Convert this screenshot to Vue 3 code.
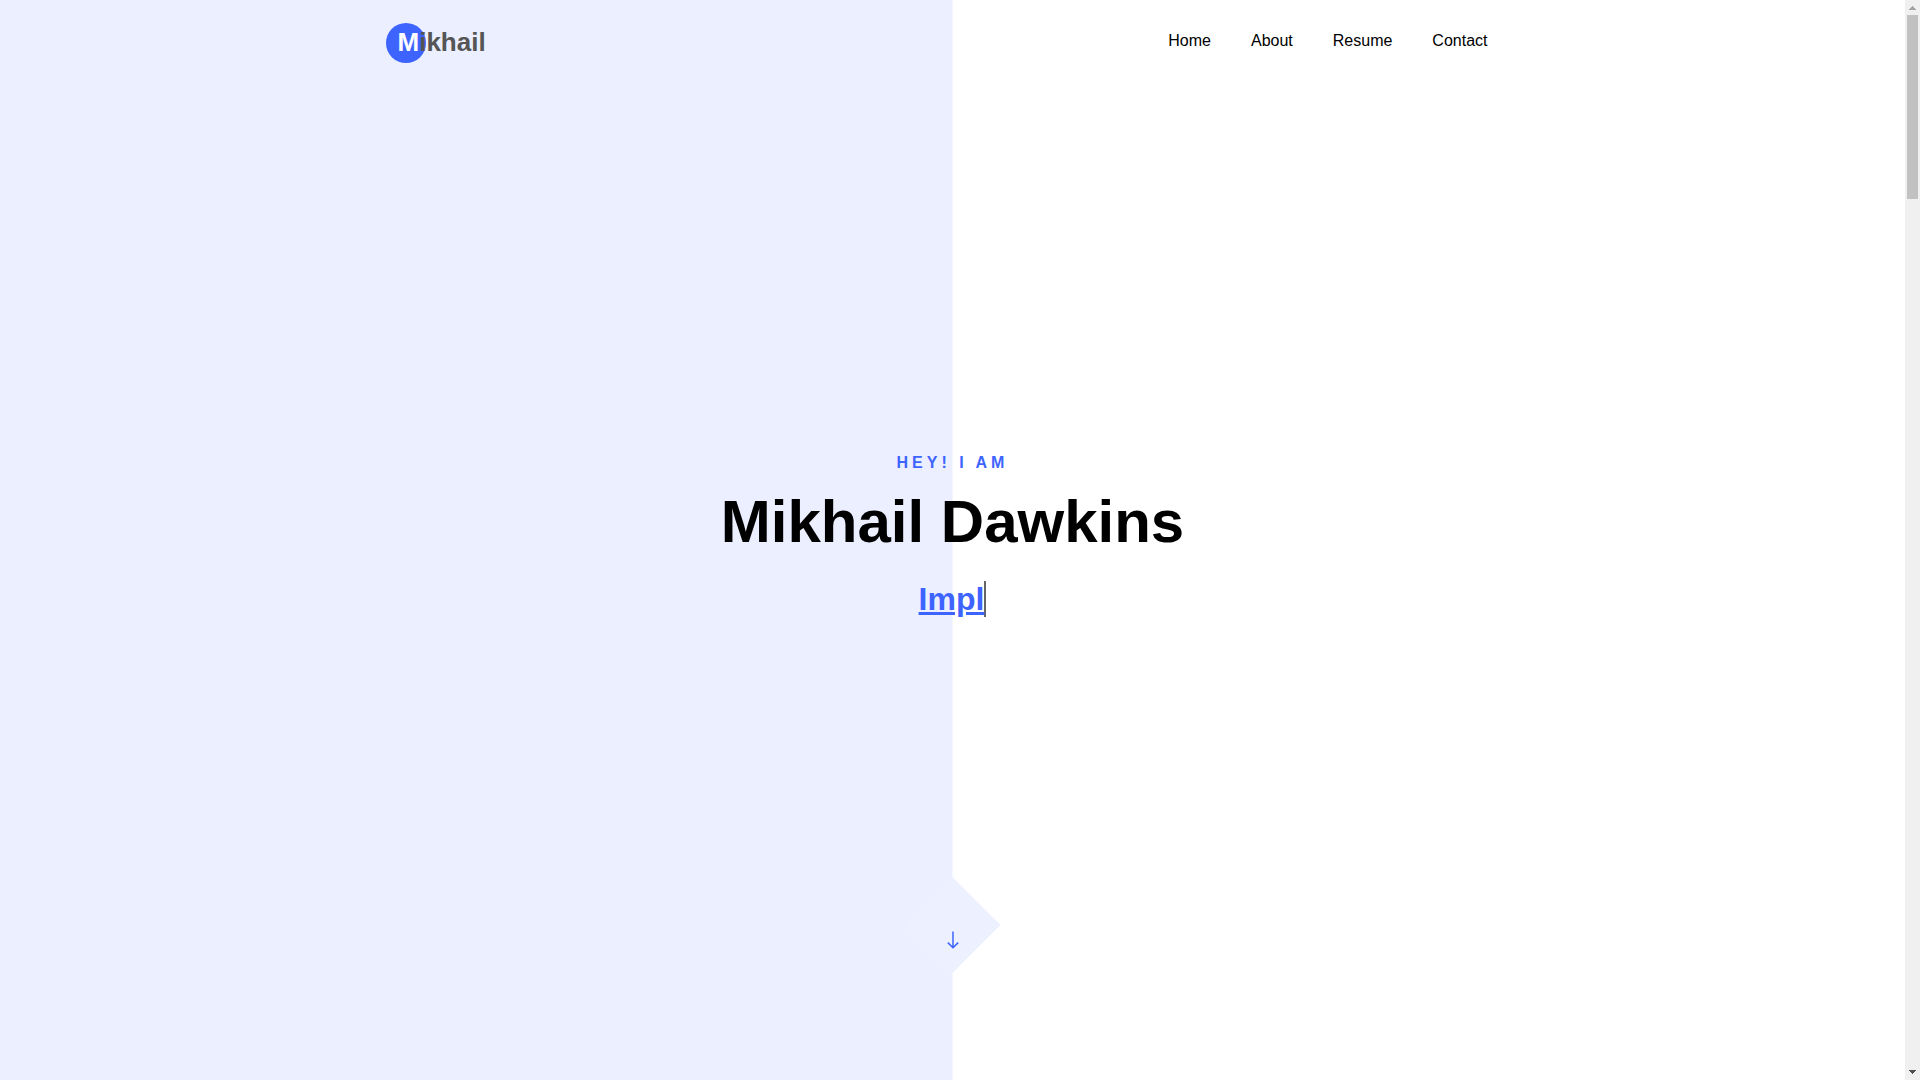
<script setup>
import { ref } from 'vue'

const links = ref([
  { label: 'Home', href: '#home' },
  { label: 'About', href: '#about' },
  { label: 'Resume', href: '#resume' },
  { label: 'Contact', href: '#contact' },
])
const typed = ref('Impl')
</script>

<template>
  <div class="window">
    <div class="page" id="home">
      <header class="navbar">
        <a class="brand" href="#home"><span class="initial">M</span>ikhail</a>
        <nav class="links" aria-label="Main">
          <a v-for="link in links" :key="link.label" :href="link.href">{{ link.label }}</a>
        </nav>
      </header>

      <main class="intro">
        <p class="greeting">Hey! I am</p>
        <h1>Mikhail Dawkins</h1>
        <h2><a class="role" href="#about">{{ typed }}</a></h2>
      </main>

      <a class="down" href="#about" aria-label="Scroll down">
        <svg width="12" height="18" viewBox="0 0 12 18" fill="none">
          <path d="M6 0.5V17M0.8 11.6L6 16.8L11.2 11.6" stroke="#3e64ff" stroke-width="1.5" />
        </svg>
      </a>
    </div>

    <div class="scrollbar" aria-hidden="true">
      <svg class="step" width="15" height="15" viewBox="0 0 15 15" shape-rendering="crispEdges">
        <path d="M7 6h1v1h1v1h1v1h1v1H4V9h1V8h1V7h1z" fill="#a3a3a3" />
      </svg>
      <div class="track"><div class="thumb"></div></div>
      <svg class="step" width="15" height="15" viewBox="0 0 15 15" shape-rendering="crispEdges">
        <path d="M4 5h7v1h-1v1H9v1H8v1H7V8H6V7H5V6H4z" fill="#505050" />
      </svg>
    </div>
  </div>
</template>

<style>
body {
  margin: 0;
}
</style>

<style scoped>
.window {
  display: grid;
  grid-template-columns: 1fr 15px;
  min-height: 100vh;
  font-family: "Liberation Sans", Arial, sans-serif;
  color: #000;
}

a {
  color: inherit;
  text-decoration: none;
}

.page {
  display: grid;
  grid-template-rows: auto 1fr auto;
  justify-items: center;
  background: linear-gradient(#ebefff, #ebefff) left top / 50% 100% no-repeat #fff;
}

.navbar {
  box-sizing: border-box;
  display: flex;
  align-items: center;
  justify-content: space-between;
  width: 100%;
  max-width: 1140px;
  padding: 22px 35px 22px 15px;
}

.brand {
  position: relative;
  z-index: 0;
  font-size: 26px;
  line-height: 40px;
  font-weight: 700;
  color: #555;
}

.brand::before {
  content: "";
  position: absolute;
  z-index: -1;
  top: 1px;
  left: -12px;
  width: 40px;
  height: 40px;
  border-radius: 50%;
  background: #3e64ff;
}

.initial {
  color: #fff;
}

.links {
  display: flex;
  gap: 40px;
  padding-bottom: 2px;
  font-size: 16px;
  line-height: 24px;
}

.intro {
  display: flex;
  flex-direction: column;
  align-items: center;
  justify-content: center;
  padding-top: 107px;
  text-align: center;
}

.greeting {
  margin: 0 0 10px;
  font-size: 16px;
  line-height: 24px;
  font-weight: 700;
  letter-spacing: 4px;
  text-transform: uppercase;
  color: #3e64ff;
}

h1 {
  margin: 0 0 22px;
  font-size: 60px;
  line-height: 74px;
  font-weight: 700;
}

h2 {
  margin: 0;
  font-size: 32px;
  line-height: 36px;
  font-weight: 700;
  border-right: 2px solid #666;
}

.role {
  color: #3e64ff;
  text-decoration: underline;
}

.down {
  display: flex;
  align-items: end;
  justify-content: center;
  box-sizing: border-box;
  width: 96px;
  height: 96px;
  margin-bottom: 107px;
  padding-bottom: 24px;
  background: #ecf0ff;
  clip-path: polygon(50% 0, 100% 50%, 50% 100%, 0 50%);
}

.down svg {
  display: block;
}

.scrollbar {
  display: flex;
  flex-direction: column;
  background: #f0f0f0;
}

.step {
  display: block;
}

.track {
  flex: 1;
  padding: 0 2px;
}

.thumb {
  height: 184px;
  background: #c1c1c1;
}
</style>
